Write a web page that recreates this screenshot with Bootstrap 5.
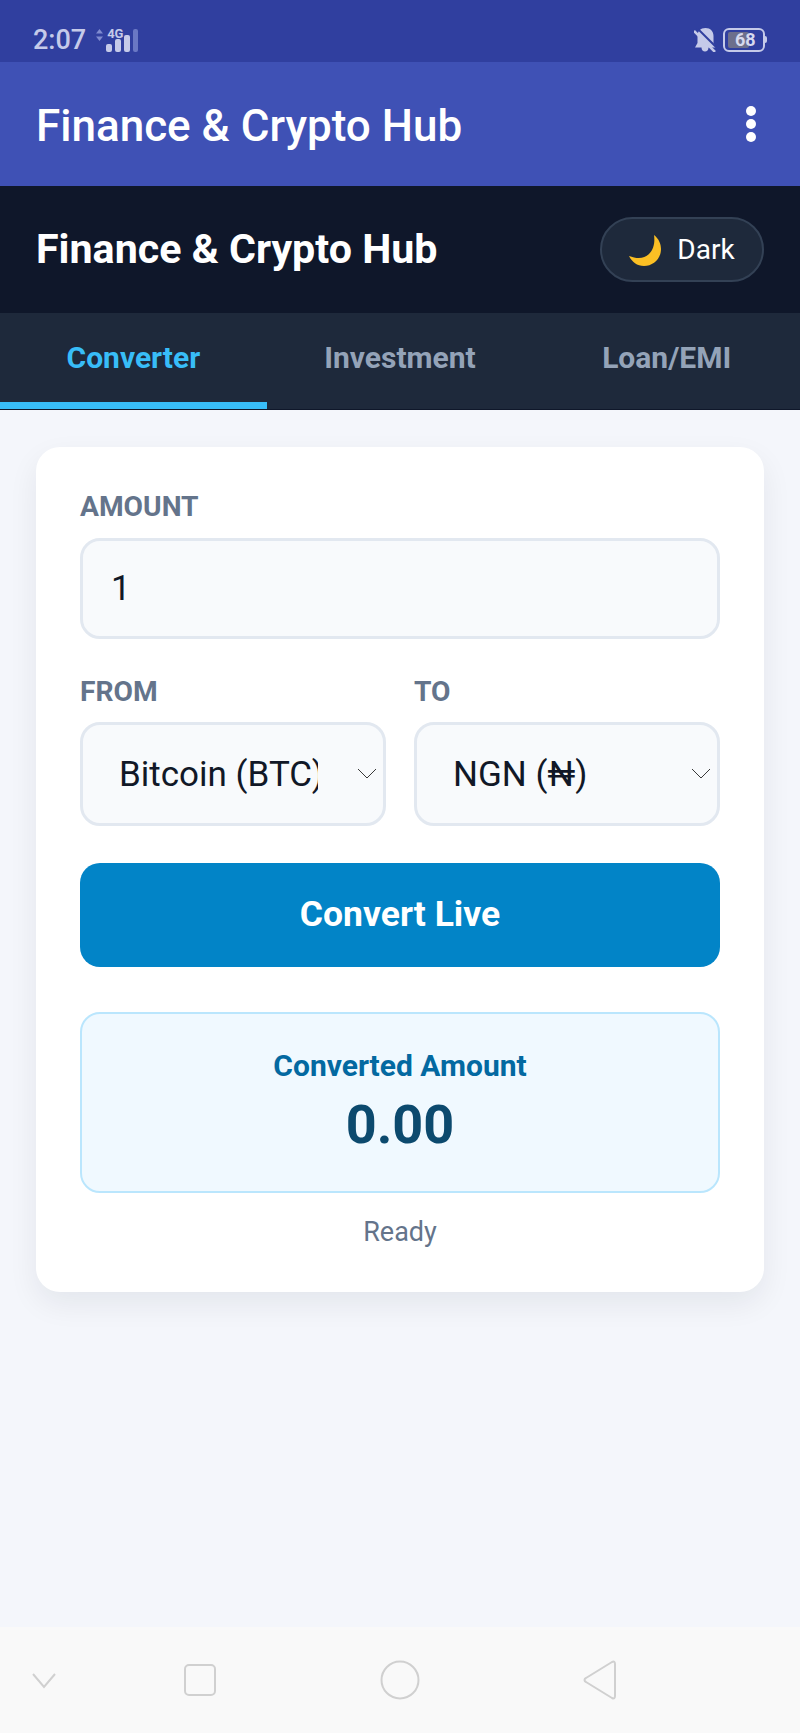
<!DOCTYPE html>
<html lang="en">
<head>
    <meta charset="UTF-8">
    <meta name="viewport" content="width=device-width, initial-scale=1.0">
    <title>Finance &amp; Crypto Hub</title>
    <link href="https://cdn.jsdelivr.net/npm/bootstrap@5.3.0/dist/css/bootstrap.min.css" rel="stylesheet">
    <style>
        html, body {
            height: 1733px;
            overflow: hidden;
        }
        body {
            font-family: Roboto, "Liberation Sans", sans-serif;
            background-color: #f4f6fb;
        }
        .phone-status {
            height: 62px;
            padding: 18px 35px 0 33px;
            background-color: #303f9f;
            color: #c5cae9;
        }
        .status-time {
            font-size: 27px;
            font-weight: 500;
            line-height: 1;
        }
        .net-arrows {
            width: 7px;
            height: 12px;
            margin: 0 3px 10px 10px;
        }
        .net-box {
            width: 34px;
            height: 24px;
            position: relative;
        }
        .net-label {
            position: absolute;
            left: 1px;
            top: -1px;
            font-size: 13px;
            font-weight: 700;
            line-height: 1;
        }
        .batt-box {
            width: 42px;
            height: 24px;
            margin-left: 6px;
            border: 2px solid #c5cae9;
            border-radius: 6px;
            padding: 2px 3px;
            position: relative;
        }
        .batt-box::after {
            content: "";
            position: absolute;
            right: -4px;
            top: 6px;
            width: 2px;
            height: 7px;
            background-color: #c5cae9;
            border-radius: 0 2px 2px 0;
        }
        .batt-fill {
            width: 21px;
            height: 100%;
            background-color: #6d6f8c;
            border-radius: 2px;
            font-size: 18px;
            font-weight: 700;
            line-height: 16px;
            color: #d6d9ee;
            padding-left: 7px;
            white-space: nowrap;
        }
        .app-bar {
            height: 124px;
            padding: 0 36px;
            background-color: #3f51b5;
            color: #fff;
        }
        .app-bar-title {
            font-size: 44px;
            font-weight: 500;
            line-height: 1;
            margin: 3px 0 0;
        }
        .menu-dots i {
            display: block;
            width: 10px;
            height: 10px;
            margin: 3px 0;
            border-radius: 50%;
            background-color: #fff;
        }
        .site-header {
            height: 127px;
            padding: 0 36px;
            background-color: #0f172a;
            color: #fff;
        }
        .site-title {
            font-size: 41.2px;
            font-weight: 700;
            line-height: 1;
            margin: 0;
        }
        .btn-theme {
            width: 164px;
            height: 65px;
            padding: 0;
            border: 2px solid #334155;
            border-radius: 33px;
            background-color: #1e293b;
            color: #fff;
            font-size: 28px;
        }
        .tab-bar {
            height: 97px;
            background-color: #1e293b;
            border-bottom: 1px solid #0f172a;
        }
        .tab-bar .nav-link {
            height: 96px;
            padding: 0;
            border-bottom: 7px solid transparent;
            border-radius: 0;
            color: #94a3b8;
            font-size: 30px;
            font-weight: 700;
            line-height: 89px;
        }
        .tab-bar .nav-link.active {
            color: #38bdf8;
            border-bottom-color: #38bdf8;
        }
        .page-main {
            padding: 37px 36px 0;
        }
        .convert-card {
            padding: 44px 44px 42px;
            border: 0;
            border-radius: 24px;
            box-shadow: 0 12px 30px rgba(15, 23, 42, .07);
        }
        .field-label {
            display: block;
            margin: 0 0 15px;
            font-size: 28.2px;
            font-weight: 700;
            line-height: 32px;
            color: #64748b;
        }
        .field-input, .field-select {
            border: 3px solid #e2e8f0;
            border-radius: 20px;
            background-color: #f8fafc;
            color: #111827;
            font-size: 35px;
        }
        .field-input {
            height: 101px;
            padding: 0 28px;
        }
        .field-select {
            height: 104px;
            padding: 3px 65px 0 36px;
            background-image: url("data:image/svg+xml,%3csvg xmlns='http://www.w3.org/2000/svg' viewBox='0 0 20 12'%3e%3cpath fill='none' stroke='%23222' stroke-width='.9' d='M1 1l9 9 9-9'/%3e%3c/svg%3e");
            background-position: right 6px center;
            background-size: 20px 12px;
        }
        .select-row {
            gap: 28px;
            margin-top: 37px;
        }
        .select-row .field-label {
            margin-bottom: 14px;
        }
        .btn-convert {
            height: 104px;
            margin-top: 37px;
            border: 0;
            border-radius: 20px;
            background-color: #0284c7;
            color: #fff;
            font-size: 35.5px;
            font-weight: 700;
        }
        .result-box {
            height: 181px;
            margin-top: 45px;
            border: 2px solid #bae6fd;
            border-radius: 20px;
            background-color: #f0f9ff;
        }
        .result-label {
            font-size: 30px;
            font-weight: 700;
            line-height: 32px;
            color: #0369a1;
        }
        .result-value {
            margin-top: 12px;
            font-size: 54px;
            font-weight: 700;
            line-height: 62px;
            color: #0c4a6e;
        }
        .status-note {
            margin-top: 21px;
            font-size: 27px;
            line-height: 36px;
            color: #64748b;
        }
        .soft-keys {
            height: 106px;
            display: grid;
            grid-template-columns: 88px 224px 176px 224px;
            background-color: #f9f9f9;
        }
    </style>
</head>
<body>
    <div class="d-flex flex-column vh-100">
        <div class="phone-status d-flex align-items-center">
            <span class="status-time">2:07</span>
            <svg class="net-arrows" viewBox="0 0 7 12"><path fill="#7f8bd0" d="M3.5 0L7 4.5H0zM3.5 12L0 7.5h7z"/></svg>
            <div class="net-box">
                <span class="net-label">4G</span>
                <svg width="34" height="24" viewBox="0 0 34 24">
                    <rect x="0" y="15" width="6" height="8" rx="2" fill="#c5cae9"/>
                    <rect x="9" y="10" width="6" height="13" rx="2" fill="#c5cae9"/>
                    <rect x="18" y="6" width="6" height="17" rx="2" fill="#c5cae9"/>
                    <rect x="27" y="0" width="5" height="23" rx="2" fill="#6a78c4"/>
                </svg>
            </div>
            <div class="ms-auto d-flex align-items-center">
                <svg width="23" height="24" viewBox="0 0 23 24">
                    <path fill="#c5cae9" d="M11.500 0c5 0 8 3.500 8 8v7l2.500 4.500H14.500c0 2.500-1.500 4-3.500 4s-3.500-1.500-3.500-4H1L3.500 15V8c0-4.500 3-8 8-8z"/>
                    <path stroke="#303f9f" stroke-width="2" d="M3 0l20 20"/>
                    <path stroke="#c5cae9" stroke-width="2.500" d="M0 3l21 21"/>
                </svg>
                <div class="batt-box"><div class="batt-fill">68</div></div>
            </div>
        </div>

        <div class="app-bar d-flex align-items-center justify-content-between">
            <h1 class="app-bar-title">Finance &amp; Crypto Hub</h1>
            <div class="menu-dots me-2"><i></i><i></i><i></i></div>
        </div>

        <header class="site-header d-flex align-items-center justify-content-between">
            <h2 class="site-title">Finance &amp; Crypto Hub</h2>
            <button type="button" class="btn btn-theme d-flex align-items-center justify-content-center gap-3">
                <svg width="32" height="32" viewBox="0 0 32 32">
                    <path fill="#fbbf24" d="M25 1C30 5 32 10 32 15 32 25 24 32 15 32 8 32 3 28 0 22 8 25 15 25 20 20 25 15 26 8 25 1z"/>
                </svg>
                <span>Dark</span>
            </button>
        </header>

        <ul class="nav nav-justified tab-bar">
            <li class="nav-item"><a class="nav-link active" href="#">Converter</a></li>
            <li class="nav-item"><a class="nav-link" href="#">Investment</a></li>
            <li class="nav-item"><a class="nav-link" href="#">Loan/EMI</a></li>
        </ul>

        <main class="page-main flex-grow-1">
            <div class="card convert-card">
                <label class="field-label" for="amount">AMOUNT</label>
                <input id="amount" class="form-control field-input" type="text" value="1">

                <div class="row g-0 flex-nowrap select-row">
                    <div class="col">
                        <label class="field-label" for="from">FROM</label>
                        <select id="from" class="form-select field-select">
                            <option>Bitcoin (BTC)</option>
                        </select>
                    </div>
                    <div class="col">
                        <label class="field-label" for="to">TO</label>
                        <select id="to" class="form-select field-select">
                            <option>NGN (₦)</option>
                        </select>
                    </div>
                </div>

                <button type="button" class="btn btn-convert w-100">Convert Live</button>

                <div class="result-box d-flex flex-column align-items-center justify-content-center">
                    <div class="result-label">Converted Amount</div>
                    <div class="result-value">0.00</div>
                </div>
                <div class="status-note text-center">Ready</div>
            </div>
        </main>

        <nav class="soft-keys align-items-center justify-items-center">
            <svg class="mx-auto" width="26" height="17" viewBox="0 0 26 17"><path fill="none" stroke="#d0d0d0" stroke-width="2" d="M2 2l11 13L24 2"/></svg>
            <svg class="mx-auto" width="34" height="34" viewBox="0 0 34 34"><rect x="2" y="2" width="30" height="30" rx="4" fill="none" stroke="#d0d0d0" stroke-width="2"/></svg>
            <svg class="mx-auto" width="40" height="40" viewBox="0 0 40 40"><circle cx="20" cy="20" r="18.500" fill="none" stroke="#d0d0d0" stroke-width="2"/></svg>
            <svg class="mx-auto" width="34" height="40" viewBox="0 0 34 40"><path fill="none" stroke="#d0d0d0" stroke-width="2" stroke-linejoin="round" d="M29 2c2-1 3 0 3 2v32c0 2-1 3-3 2L3 22c-2-1-2-3 0-4z"/></svg>
        </nav>
    </div>

    <script src="https://cdn.jsdelivr.net/npm/bootstrap@5.3.0/dist/js/bootstrap.bundle.min.js"></script>
</body>
</html>
